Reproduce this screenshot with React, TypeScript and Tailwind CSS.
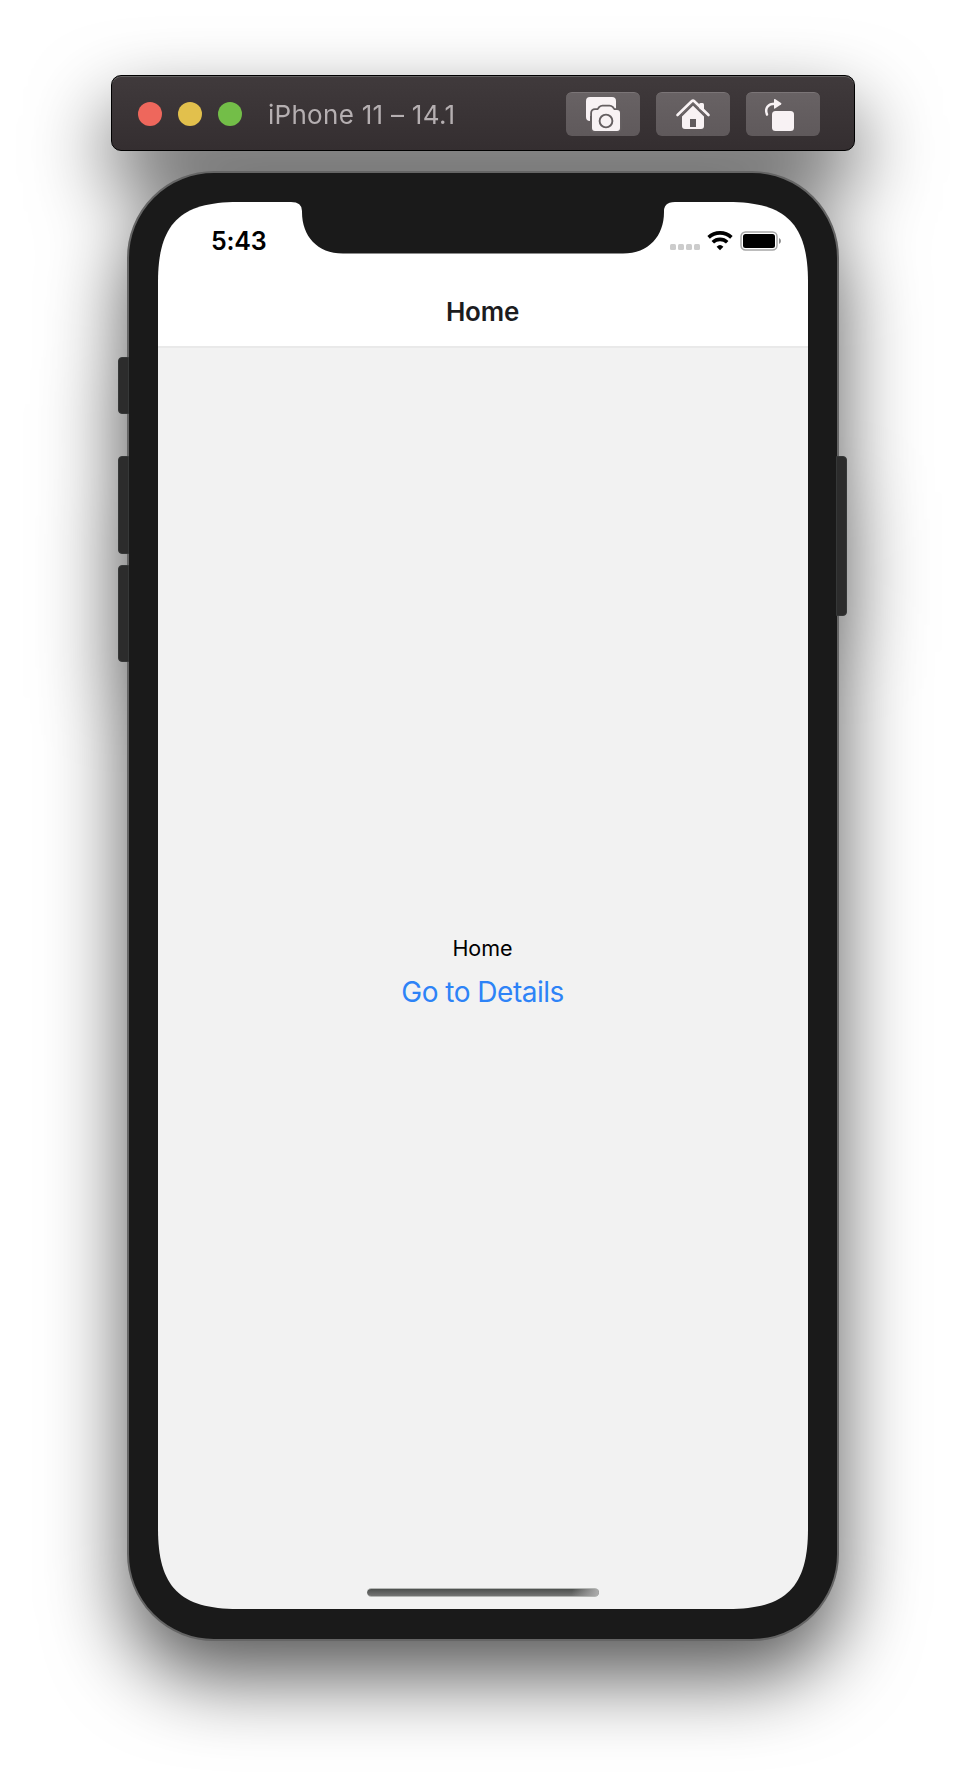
import React from "react";

const toolButton =
  "flex h-[44px] w-[74px] items-center justify-center rounded-[6px] border-t border-[#7b7577] bg-linear-to-b from-[#686264] to-[#5f595b]";

function TitleBar() {
  return (
    <header className="flex h-[76px] w-[744px] items-center rounded-[10px] border border-black bg-linear-to-b from-[#403a3c] to-[#342e30] pt-[2px] pr-[34px] pl-[26px] shadow-[inset_0_1px_0_#646262]">
      <div className="flex gap-4">
        <span className="size-6 rounded-full bg-[#ee675c]" />
        <span className="size-6 rounded-full bg-[#e2c04c]" />
        <span className="size-6 rounded-full bg-[#73be48]" />
      </div>
      <h1 className="mt-px ml-[26px] flex-1 text-[26px] leading-8 tracking-[0.28px] whitespace-nowrap text-[#b5afb1]">
        iPhone 11 – 14.1
      </h1>
      <div className="flex gap-4">
        <button className={toolButton} aria-label="Screenshot">
          <svg width="74" height="44" viewBox="0 0 74 44" className="-mt-px shrink-0">
            <path d="M24 5h22a4 4 0 0 1 4 4v15H24v5a4 4 0 0 1-4-4V9a4 4 0 0 1 4-4z" fill="#f8f2f4" />
            <path
              d="M29 18h3l2-2.5q1-1 2.500-1h7q1.500 0 2.500 1l2 2.500h3a3 3 0 0 1 3 3v15a3 3 0 0 1-3 3H29a3 3 0 0 1-3-3V21a3 3 0 0 1 3-3z"
              fill="#f8f2f4"
              stroke="#655f61"
              strokeWidth="3.600"
              paintOrder="stroke"
            />
            <circle cx="40" cy="29" r="6.400" fill="none" stroke="#645e60" strokeWidth="1.900" />
          </svg>
        </button>
        <button className={toolButton} aria-label="Home">
          <svg width="74" height="44" viewBox="0 0 74 44" className="-mt-px shrink-0">
            <path d="M43 12.500q0-1.500 1.500-1.500h2q1.500 0 1.500 1.500V20l-5-4z" fill="#f8f2f4" />
            <path d="M37 11.500 48 22v12a3 3 0 0 1-3 3H29a3 3 0 0 1-3-3V22z" fill="#f8f2f4" />
            <path d="M23.500 25.500 37 12.300 50.500 25.500" fill="none" stroke="#655f61" strokeWidth="2" />
            <path d="M21.500 23 35.700 9.300q1.300-1.200 2.600 0L52.500 23" fill="none" stroke="#f8f2f4" strokeWidth="2.600" strokeLinecap="round" />
            <path d="M34 27h6v8h-6z" fill="#625c5e" />
          </svg>
        </button>
        <button className={toolButton} aria-label="Rotate">
          <svg width="74" height="44" viewBox="0 0 74 44" className="-mt-px shrink-0">
            <rect x="26" y="19" width="22" height="20" rx="3.500" fill="#f8f2f4" />
            <path d="M21 22.500C18.500 16 22 11.700 29 11.700" fill="none" stroke="#f8f2f4" strokeWidth="2.500" strokeLinecap="round" />
            <path d="M28 7.500q0-1 1-.4l6 4q1 .7 0 1.400l-6 4q-1 .6-1-.4z" fill="#f8f2f4" />
          </svg>
        </button>
      </div>
    </header>
  );
}

function StatusBar() {
  return (
    <div className="flex h-[78px] items-center pr-[26px] pl-[53px]">
      <time className="flex-1 text-[25px] leading-8 font-semibold tracking-[-0.2px] text-black">5:43</time>
      <div className="mt-[12px] flex gap-[2px]">
        <span className="size-[6px] rounded-[1.500px] bg-[#cccccc]" />
        <span className="size-[6px] rounded-[1.500px] bg-[#cccccc]" />
        <span className="size-[6px] rounded-[1.500px] bg-[#cccccc]" />
        <span className="size-[6px] rounded-[1.500px] bg-[#cccccc]" />
      </div>
      <svg width="26" height="20" viewBox="0 0 26 20" className="-mt-px ml-[7px]">
        <g fill="none" stroke="#000" strokeWidth="3.600">
          <path d="M1.600 6.400a16.500 16.500 0 0 1 22.800 0" />
          <path d="M5.800 11.200a10.500 10.500 0 0 1 14.400 0" />
        </g>
        <path d="M13 19.200 9.600 15.700a5 5 0 0 1 6.800 0z" fill="#000" />
      </svg>
      <svg width="42" height="20" viewBox="0 0 42 20" className="ml-[7px]">
        <rect x="1" y="1" width="36" height="18" rx="4.500" fill="none" stroke="#a6a6a6" strokeWidth="1.500" />
        <rect x="3" y="3" width="32" height="14" rx="2.500" fill="#000" />
        <path d="M39 7q2 .8 2 3t-2 3z" fill="#8c8c8c" />
      </svg>
    </div>
  );
}

function Screen() {
  return (
    <main className="relative flex h-[1407px] w-[650px] flex-col bg-[#f2f2f2] [clip-path:path('M80_0H570C628_0_650_22_650_80V1327C650_1385_628_1407_570_1407H80C22_1407_0_1385_0_1327V80C0_22_22_0_80_0Z')]">
      <div className="h-[146px] shrink-0 border-b-2 border-[#e9e9e9] bg-white">
        <StatusBar />
        <h2 className="mt-[16px] mr-px text-center text-[26px] leading-8 font-semibold tracking-[-0.2px] text-[#1c1c1e]">Home</h2>
      </div>
      <div className="flex flex-1 flex-col items-center pt-[587px] pr-px">
        <p className="text-[21.500px] leading-[26px] text-black">Home</p>
        <button className="mt-[13px] text-[28px] leading-[36px] tracking-[-0.5px] text-[#2d83f7]">Go to Details</button>
      </div>
      <div className="mr-px mb-[12px] h-[9px] w-[232px] self-center rounded-full border-y border-[#b4b6b4] bg-[linear-gradient(100deg,transparent_88%,#aaa_99%),linear-gradient(#4d504e,#747474)]" />
      <svg className="absolute top-0 left-[133px]" width="384" height="52" viewBox="0 0 384 52">
        <path
          d="M0 0H384Q373 0 373 9V10C373 34 358 51.500 332 51.500H52C26 51.500 11 34 11 10V9Q11 0 0 0Z"
          fill="#1a1a1a"
        />
      </svg>
    </main>
  );
}

const sideButton = "border border-[#363838] bg-[#2c2c2c]";

export default function App() {
  return (
    <div className="flex h-[1790px] w-[966px] flex-col items-center overflow-hidden bg-white pt-[75px] font-['Inter','Liberation_Sans',sans-serif]">
      <div className="flex flex-col items-center [filter:drop-shadow(0_36px_40px_rgba(0,0,0,0.66))]">
        <TitleBar />
        <div className="mt-[20px] flex">
          <div className="z-10 -mr-[2px] flex w-[11px] flex-col pt-[186px]">
            <span className={`h-[57px] rounded-l-[4px] ${sideButton}`} />
            <span className={`mt-[42px] h-[98px] rounded-l-[4px] ${sideButton}`} />
            <span className={`mt-[11px] h-[97px] rounded-l-[4px] ${sideButton}`} />
          </div>
          <div className="flex h-[1470px] w-[712px] items-start justify-center rounded-[87px] border-2 border-[#656565] bg-[#1a1a1a] pt-[29px]">
            <Screen />
          </div>
          <div className="z-10 -ml-[3px] mr-px flex w-[11px] flex-col pt-[285px]">
            <span className={`h-[160px] rounded-r-[4px] ${sideButton}`} />
          </div>
        </div>
      </div>
    </div>
  );
}
